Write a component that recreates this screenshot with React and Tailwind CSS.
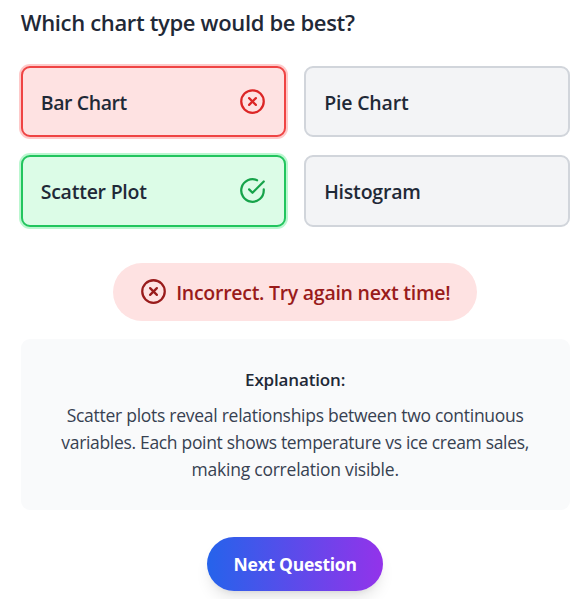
const FONT = "font-['Segoe_UI','Open_Sans','Noto_Sans',sans-serif]";

function CrossIcon({ className }) {
  return (
    <svg viewBox="0 0 24 24" fill="none" stroke="currentColor" strokeWidth="2" strokeLinecap="round" strokeLinejoin="round" className={className}>
      <circle cx="12" cy="12" r="10" />
      <path d="m15 9-6 6" />
      <path d="m9 9 6 6" />
    </svg>
  );
}

function CheckIcon({ className }) {
  return (
    <svg viewBox="0 0 24 24" fill="none" stroke="currentColor" strokeWidth="2" strokeLinecap="round" strokeLinejoin="round" className={className}>
      <path d="M22 11.08V12a10 10 0 1 1-5.93-9.14" />
      <path d="m9 11 3 3L22 4" />
    </svg>
  );
}

const STATES = {
  wrong: "border-[#ef4444] bg-[#fee2e2] ring-2 ring-[#fecaca]",
  right: "border-[#22c55e] bg-[#dcfce7] ring-2 ring-[#bbf7d0]",
  idle: "border-[#d1d5db] bg-[#f3f4f6]",
};

function Option({ label, state, tracking }) {
  return (
    <button className={"flex items-center justify-between rounded-[9px] border-2 px-[18px] text-left text-[#1f2937] " + STATES[state]}>
      <span className={"pt-[2.4px] text-[19.5px] leading-[31.5px] font-[560] whitespace-nowrap " + tracking}>{label}</span>
      {state === "wrong" && <CrossIcon className="size-[27px] text-[#dc2626]" />}
      {state === "right" && <CheckIcon className="size-[27px] text-[#16a34a]" />}
    </button>
  );
}

export default function App() {
  return (
    <main className={"flex h-[599px] w-[583px] flex-col overflow-hidden bg-white pr-[13.4px] pl-[20.7px] " + FONT}>
      <h2 className="mt-[6px] mb-px h-[32px] text-[22px] leading-[32px] font-[560] tracking-[-0.34px] whitespace-nowrap text-[#1f2937]">
        Which chart type would be best?
      </h2>
      <div className="mt-[26.8px] grid grid-cols-2 grid-rows-[71.1px_71.8px] gap-[18px]">
        <Option label="Bar Chart" state="wrong" tracking="tracking-[-0.4px]" />
        <Option label="Pie Chart" state="idle" tracking="tracking-[-0.17px]" />
        <Option label="Scatter Plot" state="right" tracking="tracking-[-0.24px]" />
        <Option label="Histogram" state="idle" tracking="tracking-[-0.2px]" />
      </div>
      <div className="mt-[36.3px] flex h-[58px] w-[364px] shrink-0 items-center gap-[9px] self-center rounded-full bg-[#fee2e2] pl-[27px] text-[#991b1b]">
        <CrossIcon className="size-[27px] shrink-0" />
        <span className="pt-[2px] text-[19.5px] leading-[31px] font-[560] tracking-[-0.27px] whitespace-nowrap">Incorrect. Try again next time!</span>
      </div>
      <section className="mt-[18px] h-[171px] shrink-0 rounded-[9px] bg-[#f9fafb] py-[27px] text-center leading-[27px] whitespace-nowrap">
        <h3 className="text-[17px] font-semibold tracking-[-0.15px] text-[#1f2937]">Explanation:</h3>
        <p className="mt-[9px] text-[17.5px] text-[#374151]">
          <span className="tracking-[-0.27px]">Scatter plots reveal relationships between two continuous</span>
          <br />
          <span className="tracking-[-0.32px]">variables. Each point shows temperature vs ice cream sales,</span>
          <br />
          <span className="tracking-[-0.23px]">making correlation visible.</span>
        </p>
      </section>
      <button className="mt-[27px] h-[54px] w-[176px] shrink-0 self-center rounded-full bg-linear-to-r/srgb from-[#2563eb] to-[#9333ea] pt-[2px] text-[17.5px] leading-[27px] font-bold tracking-[-0.27px] whitespace-nowrap text-white shadow-lg">
        Next Question
      </button>
    </main>
  );
}
